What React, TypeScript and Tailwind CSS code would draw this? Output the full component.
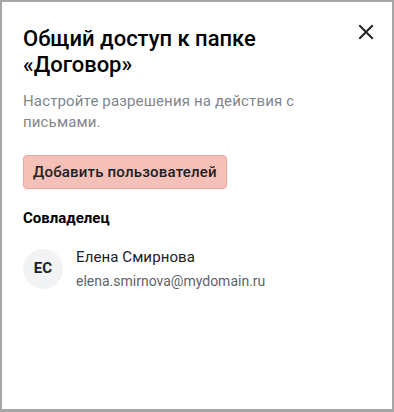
import React from "react";

export default function App() {
  return (
    <div
      className="w-[394px] h-[412px] bg-[#a6a6a6] pt-[2px] pl-[2px] pr-[2px] pb-[3px]"
      style={{ fontFamily: "Roboto, 'Noto Sans', sans-serif" }}
    >
      <div className="relative h-full bg-white pl-[21px] pr-[20px] pt-[24px]">
        <button className="absolute right-[17px] top-[21px] w-[18px] h-[18px] flex items-center justify-center text-[#202124]">
          <svg width="16" height="16" viewBox="0 0 16 16" fill="none">
            <path d="M2 2L14 14M14 2L2 14" stroke="currentColor" strokeWidth="2" strokeLinecap="square" />
          </svg>
        </button>
        <h1 className="text-[22px] leading-[26px] font-medium text-[#000000] pr-[40px]">
          Общий доступ к папке «Договор»
        </h1>
        <p className="mt-[13px] text-[15px] leading-[21px] tracking-[0.15px] text-[#80868b] pr-[40px]">
          Настройте разрешения на действия с письмами.
        </p>
        <button className="mt-[22px] h-[34px] px-[9px] rounded-[4px] bg-[#f5c0b8] border border-[#eea69b] text-[15px] tracking-[0.2px] font-medium text-[#202124]">
          Добавить пользователей
        </button>
        <div className="mt-[19px] text-[15px] leading-[20px] font-bold text-black">Совладелец</div>
        <div className="mt-[19px] flex items-center gap-[13px]">
          <div className="w-[40px] h-[40px] rounded-full bg-[#f1f3f4] flex items-center justify-center text-[15px] font-bold text-[#202124]">
            ЕС
          </div>
          <div className="flex flex-col">
            <span className="text-[15px] leading-[20px] tracking-[0.1px] text-[#202124]">Елена Смирнова</span>
            <span className="mt-[5px] text-[14px] leading-[18px] text-[#5f6368]">elena.smirnova@mydomain.ru</span>
          </div>
        </div>
      </div>
    </div>
  );
}
